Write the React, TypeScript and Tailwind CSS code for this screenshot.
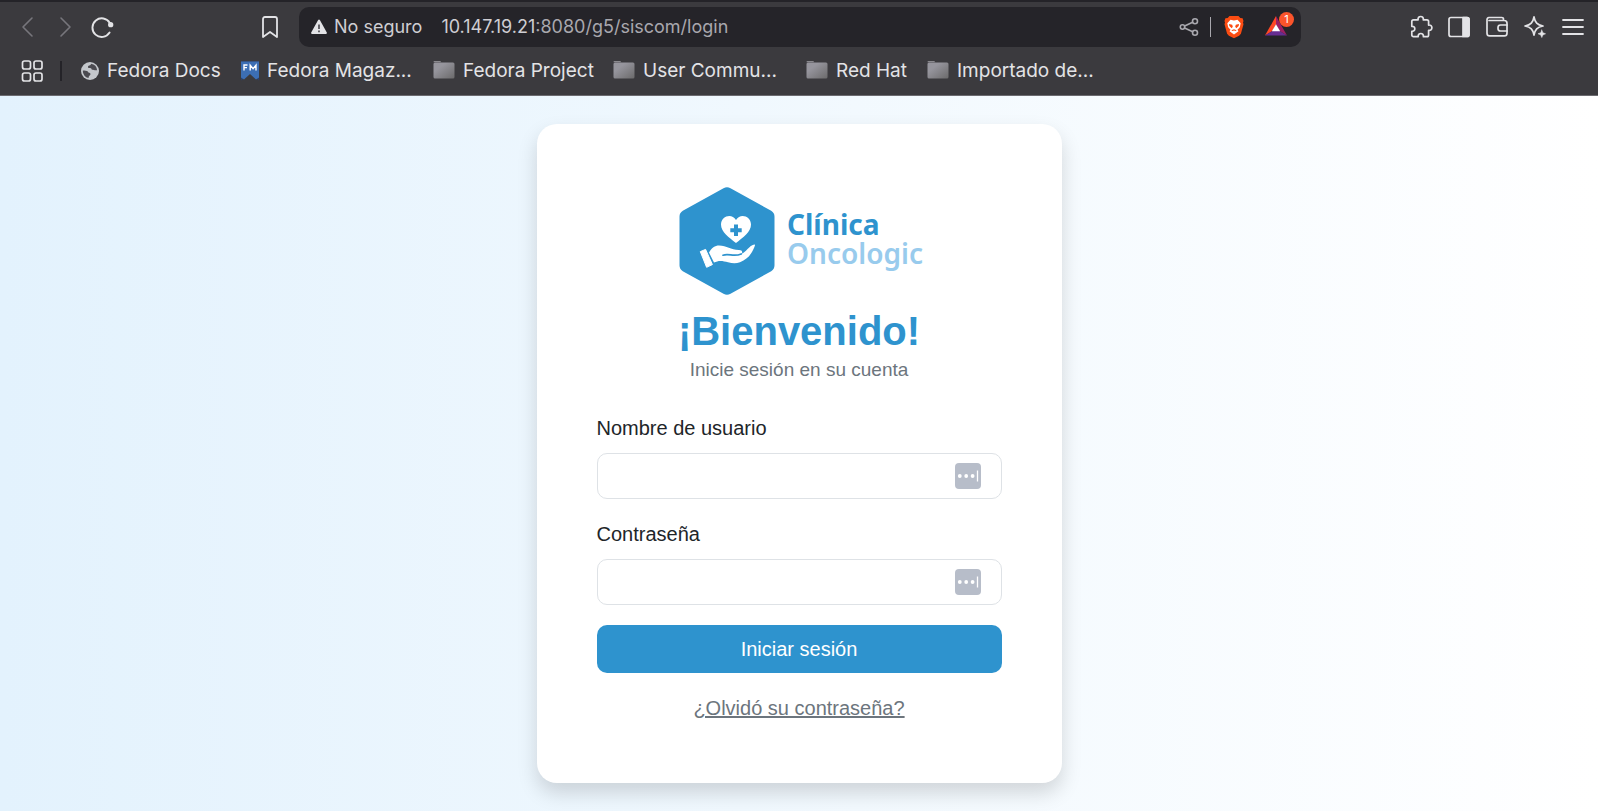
import { useState } from "react";
import type { ReactNode } from "react";

function IconButton({ label, children }: { label: string; children: ReactNode }) {
  return (
    <button type="button" aria-label={label} className="flex size-6 shrink-0 items-center justify-center">
      {children}
    </button>
  );
}

const line = { fill: "none", stroke: "currentColor", strokeLinecap: "round", strokeLinejoin: "round" } as const;

function Toolbar() {
  return (
    <div className="flex items-center pt-[5px] text-[#e3e3e6]">
      <div className="flex items-center gap-[13px] pl-4">
        <IconButton label="Atrás">
          <svg viewBox="0 0 24 24" className="size-6 text-[#77767c]" {...line} strokeWidth="1.6"><path d="M16 3 7 12l9 9" /></svg>
        </IconButton>
        <IconButton label="Adelante">
          <svg viewBox="0 0 24 24" className="size-6 text-[#77767c]" {...line} strokeWidth="1.6"><path d="m8 3 9 9-9 9" /></svg>
        </IconButton>
        <IconButton label="Recargar">
          <svg viewBox="0 0 24 24" className="size-6" {...line} strokeWidth="1.9">
            <path d="M19.600 17.600A9.300 9.300 0 1 1 19.800 8" />
            <circle cx="20.700" cy="9.700" r="1.700" fill="currentColor" />
          </svg>
        </IconButton>
      </div>
      <div className="ml-36">
        <IconButton label="Guardar marcador">
          <svg viewBox="0 0 24 24" className="size-6" {...line} strokeWidth="1.8"><path d="M5 4.200C5 2.900 5.700 2 7 2h10c1.300 0 2 .9 2 2.200V22l-7-5-7 5Z" /></svg>
        </IconButton>
      </div>
      <div className="ml-[17px] flex h-10 min-w-0 flex-1 items-center rounded-[10px] bg-[#252429] pr-[13px] pl-[11px]">
        <button type="button" className="flex shrink-0 items-center gap-1.5 text-lg text-[#cfced3]">
          <svg viewBox="0 0 18 18" className="size-[18px]" aria-hidden="true">
            <path d="M8 2.200a1.200 1.200 0 0 1 2 0l6.800 12.300a1 1 0 0 1-.9 1.500H2.100a1 1 0 0 1-.9-1.500Z" fill="#e3e3e6" />
            <path d="M9 6.500v4.500M9 12.600v1.600" stroke="#57565c" strokeWidth="1.8" />
          </svg>
          No seguro
        </button>
        <div className="ml-[19px] min-w-0 flex-1 truncate text-lg text-[#a9a8ae]">
          <span className="text-[#cfced3]">10.147.19.21</span>:8080/g5/siscom/login
        </div>
        <div className="flex items-center gap-[9px]">
          <IconButton label="Compartir">
            <svg viewBox="0 0 24 24" className="size-6 text-[#a9a8ae]" {...line} strokeWidth="1.6">
              <circle cx="5.500" cy="12" r="2.200" />
              <circle cx="18" cy="6.300" r="2.500" />
              <circle cx="18" cy="17.700" r="2.500" />
              <path d="m7.600 11 8.100-3.700M7.600 13l8.100 3.700" />
            </svg>
          </IconButton>
          <div className="h-5 w-px bg-[#a9a8ae]" />
          <div className="ml-0.5 flex">
            <IconButton label="Brave Shields">
              <svg viewBox="0 0 24 24" className="size-6" aria-hidden="true">
                <path d="M7.500 1h9l1.800 2 2.300.3.900 2.600-.5 1.700.5 1.600-2.600 9.500-1.800 2.100L12 23.300l-5.100-2.500-1.800-2.100L2.500 9.200 3 7.600l-.5-1.700.9-2.600L5.700 3Z" fill="#fb4c12" />
                <path d="M8.500 4.800 12 5.600l3.500-.8 3.200 3.400-.9 4-2.300 2.600 1 1.400-4.500 3.400-4.500-3.400 1-1.400-2.300-2.600-.9-4Z" fill="#fff" />
                <path d="m7 9 3.200.8.600 2-1.100 1.400L7.300 11ZM17 9l-3.200.8-.6 2 1.100 1.400 2.400-2.200ZM9.400 15.300l2.600-1.100 2.600 1.100-1 .8-1.600-.7-1.600.7Z" fill="#fb4c12" />
              </svg>
            </IconButton>
          </div>
          <div className="relative ml-[9px] flex">
            <IconButton label="Brave Rewards">
              <svg viewBox="0 0 24 24" className="size-6" aria-hidden="true">
                <path d="M12 1v8.500L8.300 16 1 20.500Z" fill="#ff4724" />
                <path d="M12 1v8.500l3.700 6.500L23 20.500Z" fill="#9e1f63" />
                <path d="M1 20.500 8.300 16h7.400l7.300 4.500Z" fill="#662d91" />
                <path d="m12 9.300 4.200 7H7.800Z" fill="#fff" />
              </svg>
            </IconButton>
            <span className="absolute -top-[3px] left-[15px] flex size-[15px] items-center justify-center rounded-full bg-[#fb542b] text-[11px] leading-none text-white">1</span>
          </div>
        </div>
      </div>
      <div className="ml-[108px] flex items-center gap-[14px] pr-[13px]">
        <IconButton label="Extensiones">
          <svg viewBox="0 0 24 24" className="size-6" {...line} strokeWidth="1.700">
            <path d="M4.500 4.800h4.600c-.4-2 .9-3.300 2.600-3.300s3 1.300 2.600 3.300h3.600c1 0 1.700.7 1.700 1.700v3.600c2-.4 3.300.9 3.300 2.600s-1.300 3-3.300 2.600v4.700c0 1-.7 1.700-1.700 1.700h-3.500c.2-2-.9-3.200-2.600-3.200s-2.800 1.200-2.600 3.200H4.500c-1 0-1.700-.7-1.700-1.700v-3.700c2 .2 3-.9 3-2.500s-1-2.700-3-2.500V6.500c0-1 .7-1.700 1.700-1.700Z" />
          </svg>
        </IconButton>
        <IconButton label="Barra lateral">
          <svg viewBox="0 0 24 24" className="size-6" {...line} strokeWidth="1.700">
            <rect x="2" y="2.500" width="20" height="19" rx="2" />
            <path d="M16 2.500h4a2 2 0 0 1 2 2v15a2 2 0 0 1-2 2h-4Z" fill="currentColor" />
          </svg>
        </IconButton>
        <IconButton label="Cartera">
          <svg viewBox="0 0 24 24" className="size-6" {...line} strokeWidth="1.700">
            <path d="M18.500 5.500V4.200c0-1-.8-1.700-1.700-1.700H4a2.300 2.300 0 0 0-2 2.300v13.400a2.700 2.700 0 0 0 2.700 2.700h14.600a2.700 2.700 0 0 0 2.700-2.700V8.200a2.700 2.700 0 0 0-2.700-2.700H4" />
            <path d="M22 10h-6.500a2.500 2.500 0 0 0-2.500 2.500v1a2.500 2.500 0 0 0 2.500 2.500H22" />
          </svg>
        </IconButton>
        <IconButton label="Leo AI">
          <svg viewBox="0 0 24 24" className="size-6" {...line} strokeWidth="1.700">
            <path d="M11 1.800c1 5.600 3.200 8 9 9.200-5.800 1.200-8 3.500-9 9.200-1-5.700-3.200-8-9-9.200 5.800-1.200 8-3.600 9-9.200Z" />
            <path d="m18.800 15 1.100 2.700 2.700 1.100-2.700 1.100-1.100 2.700-1.100-2.700-2.700-1.100 2.700-1.100Z" fill="currentColor" strokeWidth=".5" />
          </svg>
        </IconButton>
        <IconButton label="Menú">
          <svg viewBox="0 0 24 24" className="size-6" {...line} strokeWidth="1.800"><path d="M2 5h20M2 12h20M2 19h20" /></svg>
        </IconButton>
      </div>
    </div>
  );
}

function FolderIcon() {
  return (
    <svg viewBox="0 0 22 20" className="h-5 w-[22px] shrink-0" aria-hidden="true">
      <defs>
        <linearGradient id="folder" x1="0" y1="0" x2="1" y2="1">
          <stop offset="0.3" stopColor="#96959d" />
          <stop offset="1" stopColor="#6b6a6b" />
        </linearGradient>
      </defs>
      <path d="M.5 1C.5.400.800 0 1.300 0h6l1 1.200H.5Z" fill="#8a898e" />
      <rect x="0.500" y="1.500" width="21" height="16" rx="1.500" fill="url(#folder)" />
    </svg>
  );
}

function GlobeIcon() {
  return (
    <svg viewBox="0 0 18 18" className="size-[18px] shrink-0" aria-hidden="true">
      <circle cx="9" cy="9" r="9" fill="#c4c7cc" />
      <path d="M10 1.800c-.2 1.700-1.300 1.700-2.800 2.100-.5 1.400-.2 2 1.300 2.100 1.600-.3 2 .6 2.300 1.700 1.800 0 2.700.8 5.300.6A7.200 7.200 0 0 0 10 1.800ZM1.800 8.700c2.400-.4 5.100.3 5.600 1.800 1.500.3 2.400.8 2 2-.5 1-1.600 1.200-1.900 3.500A7.200 7.200 0 0 1 1.800 8.700Z" fill="#4b4a50" />
    </svg>
  );
}

function MagazineIcon() {
  return (
    <svg viewBox="0 0 18 20" className="h-5 w-[18px] shrink-0" aria-hidden="true">
      <path d="M0 .5h18v19L9 12.500l-9 7Z" fill="#294172" />
      <path d="M0 .5h18v16l-3 2-6-5.500-6 5.500-3-2Z" fill="#3c6eb4" />
      <path d="M3 9.500V4h3.500M3 6.600h3M9.200 9.500V4.200l2.900 3.500L15 4.200v5.300" fill="none" stroke="#fff" strokeWidth="1.400" />
    </svg>
  );
}

const bookmarks = [
  { name: "Fedora Docs", icon: <GlobeIcon />, width: "w-[160px]" },
  { name: "Fedora Magaz...", icon: <MagazineIcon />, width: "w-[192px]" },
  { name: "Fedora Project", icon: <FolderIcon />, width: "w-[180px]" },
  { name: "User Commu...", icon: <FolderIcon />, width: "w-[193px]" },
  { name: "Red Hat", icon: <FolderIcon />, width: "w-[121px]" },
  { name: "Importado de...", icon: <FolderIcon />, width: "w-[180px]" },
];

function BookmarksBar() {
  return (
    <nav aria-label="Marcadores" className="flex h-12 items-center pl-5 text-[19px] text-[#e3e3e6]">
      <IconButton label="Todas las pestañas">
        <svg viewBox="0 0 24 24" className="size-6" {...line} strokeWidth="1.700">
          <rect x="2.500" y="2" width="8" height="8" rx="2" />
          <rect x="14" y="2" width="8" height="8" rx="2" />
          <rect x="2.500" y="14" width="8" height="8" rx="2" />
          <rect x="14" y="14" width="8" height="8" rx="2" />
        </svg>
      </IconButton>
      <div className="mr-[19px] ml-4 h-5 w-0.5 bg-[#242328]" />
      {bookmarks.map((b) => (
        <a key={b.name} href="#" className={`flex shrink-0 items-center gap-2 whitespace-nowrap ${b.width}`}>
          {b.icon}
          {b.name}
        </a>
      ))}
    </nav>
  );
}

function Logo() {
  return (
    <div className="flex items-center justify-center gap-3 pl-1">
      <svg viewBox="0 0 96 108" className="h-[108px] w-24 shrink-0" aria-hidden="true">
        <path d="M44.500 1.200a7 7 0 0 1 7 0L92.200 23.800a7 7 0 0 1 3.300 6V78.200a7 7 0 0 1-3.300 6L51.500 106.800a7 7 0 0 1-7 0L3.800 84.200a7 7 0 0 1-3.300-6V29.800a7 7 0 0 1 3.300-6Z" fill="#2e93ce" />
        <path d="M57 56C50 50.500 42 45 42 37.500c0-8 10.500-12 15-4.500 4.500-7.500 15-3.500 15 4.500C72 45 64 50.500 57 56Z" fill="#fff" />
        <path d="M57 37.500v11.500M51.300 43.200h11.400" stroke="#2e93ce" strokeWidth="4" />
        <path d="m21.300 64.600 5.300-2.200 6.800 15.200-5.800 2.700Z" fill="#fff" stroke="#fff" strokeLinejoin="round" />
        <path d="M30 65.500c2.500-4.500 6-7 10-7 8 0 11.500 4.500 20 4.500 3 0 4 2 2.500 3.800 5-1.800 7-7.800 12.700-9.300 1.500-.2.700 1.500 0 3C72.500 67 69 72 61 75.200c-4 1.600-7.500 1.300-12 .1-5-1.500-9.500-2.200-14 .3Z" fill="#fff" />
        <path d="M44 68.200c6-2 11 2 18.200-1.300" fill="none" stroke="#2e93ce" strokeWidth="1.700" strokeLinecap="round" />
      </svg>
      <div className="pb-1 font-['Noto_Sans',sans-serif] text-[28px] leading-[29px] font-bold">
        <div className="text-[#2e93ce]">Clínica</div>
        <div className="font-semibold text-[#98cbed]">Oncologic</div>
      </div>
    </div>
  );
}

function Field({ id, label, type }: { id: string; label: string; type: string }) {
  const [value, setValue] = useState("");
  return (
    <div>
      <label htmlFor={id} className="block text-xl leading-[30px] text-[#212529]">{label}</label>
      <div className="relative mt-[10px]">
        <input
          id={id}
          type={type}
          value={value}
          onChange={(e) => setValue(e.target.value)}
          className="block h-[46px] w-full rounded-[10px] border border-[#dee2e6] bg-white pr-14 pl-4 text-xl outline-none focus:border-[#2e93ce]"
        />
        <svg viewBox="0 0 26 26" className="absolute top-[10px] right-[21px] size-[26px]" aria-hidden="true">
          <rect width="26" height="26" rx="4" fill="#b7bdc9" />
          <circle cx="4.800" cy="13" r="1.900" fill="#fff" />
          <circle cx="11.200" cy="13" r="1.900" fill="#fff" />
          <circle cx="17.600" cy="13" r="1.900" fill="#fff" />
          <path d="M22.500 7.500v11" stroke="#fff" strokeWidth="1.300" />
        </svg>
      </div>
    </div>
  );
}

export default function App() {
  return (
    <div className="flex min-h-screen flex-col font-['Liberation_Sans',Arial,sans-serif]">
      <header className="border-t-2 border-b border-t-[#242328] border-b-[#6b6a6f] bg-[#3b3a3e] font-['Inter',sans-serif]">
        <Toolbar />
        <BookmarksBar />
      </header>
      <main className="flex flex-1 items-start justify-center bg-linear-to-r from-[#e3f2fd] to-white px-4 pt-7 pb-7">
        <section className="w-full max-w-[525px] rounded-[20px] bg-white px-[60px] pt-[63px] pb-[60px] shadow-[0_10px_20px_rgba(0,0,0,0.15)]">
          <Logo />
          <h1 className="mt-3 text-center text-[40px] leading-[48px] font-bold text-[#2e93ce]">¡Bienvenido!</h1>
          <p className="text-center text-[19px] leading-[30px] text-[#6c757d]">Inicie sesión en su cuenta</p>
          <form className="mt-7" onSubmit={(e) => e.preventDefault()}>
            <div className="flex flex-col gap-5">
              <Field id="usuario" label="Nombre de usuario" type="text" />
              <Field id="contrasena" label="Contraseña" type="password" />
            </div>
            <button type="submit" className="mt-5 h-12 w-full rounded-[10px] bg-[#2e93ce] text-xl text-white">Iniciar sesión</button>
          </form>
          <p className="mt-5 text-center text-xl leading-[30px]">
            <a href="#" className="text-[#6c757d] underline">¿Olvidó su contraseña?</a>
          </p>
        </section>
      </main>
    </div>
  );
}
